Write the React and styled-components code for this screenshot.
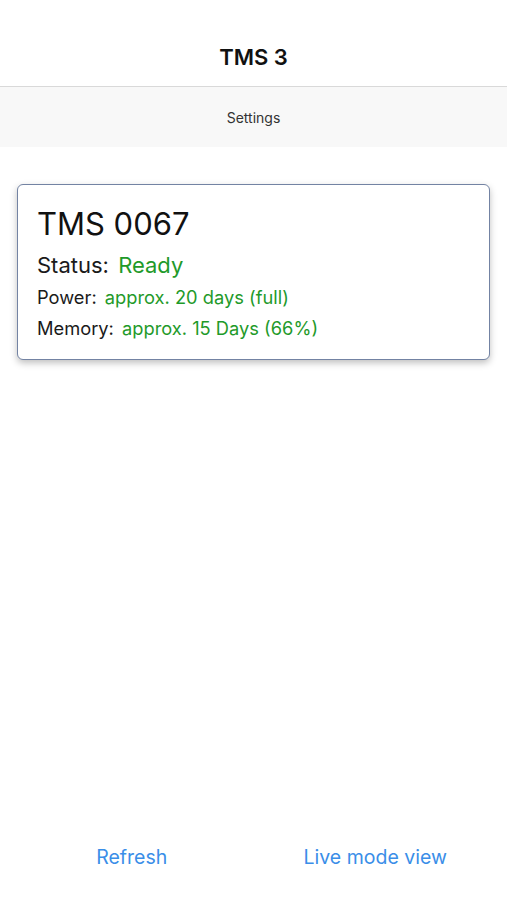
import styled, { createGlobalStyle } from "styled-components";

const GlobalStyle = createGlobalStyle`
    * {
        box-sizing: border-box;
    }

    body {
        margin: 0;
        background-color: #ffffff;
        font-family: Inter, "Liberation Sans", sans-serif;
        color: #111111;
    }
`;

const device = {
    name: "TMS 0067",
    status: "Ready",
    power: "approx. 20 days (full)",
    memory: "approx. 15 Days (66%)",
};

export default function App() {
    return (
        <>
            <GlobalStyle />
            <Page>
                <NavBar>
                    <h1>TMS 3</h1>
                </NavBar>
                <SettingsBar>Settings</SettingsBar>
                <Content>
                    <DeviceCard>
                        <h2>{device.name}</h2>
                        <Row size={22} height={33}>
                            Status: <Value>{device.status}</Value>
                        </Row>
                        <Row size={18.3} height={31}>
                            Power: <Value>{device.power}</Value>
                        </Row>
                        <Row size={18.3} height={31}>
                            Memory: <Value>{device.memory}</Value>
                        </Row>
                    </DeviceCard>
                </Content>
                <Footer>
                    <LinkButton>Refresh</LinkButton>
                    <LinkButton>Live mode view</LinkButton>
                </Footer>
            </Page>
        </>
    );
}

const Page = styled.div`
    min-height: 100vh;
    display: flex;
    flex-direction: column;
`;

const NavBar = styled.header`
    height: 87px;
    padding-top: 28px;
    display: flex;
    align-items: center;
    justify-content: center;
    border-bottom: 1px solid #d9d9d9;

    h1 {
        margin: 0;
        font-size: 22px;
        font-weight: 600;
        color: #111111;
    }
`;

const SettingsBar = styled.div`
    height: 60px;
    display: flex;
    align-items: center;
    justify-content: center;
    background-color: #f8f8f8;
    font-size: 14px;
    color: #333333;
`;

const Content = styled.main`
    flex: 1;
    padding: 37px 17px 0;
`;

const DeviceCard = styled.section`
    border: 1.5px solid #7383a3;
    border-radius: 6px;
    background-color: #ffffff;
    box-shadow: 0 3px 7px rgba(0, 0, 0, 0.25);
    padding: 20px 19px 14px;
    min-height: 176px;

    h2 {
        margin: 0 0 6px;
        font-size: 31px;
        font-weight: 400;
        line-height: 38px;
        color: #111111;
    }
`;

const Row = styled.p`
    margin: 0;
    font-size: ${(props) => props.size}px;
    line-height: ${(props) => props.height}px;
    color: #1a1a1a;
`;

const Value = styled.span`
    margin-left: 3px;
    color: #1f9a2a;
`;

const Footer = styled.footer`
    height: 86px;
    padding: 0 10px;
    display: grid;
    grid-template-columns: 1fr 1fr;
    align-items: center;
    justify-items: center;
`;

const LinkButton = styled.button`
    border: none;
    background: none;
    padding: 0;
    font-family: inherit;
    font-size: 19.5px;
    color: #3a8ee8;
    cursor: pointer;
`;
